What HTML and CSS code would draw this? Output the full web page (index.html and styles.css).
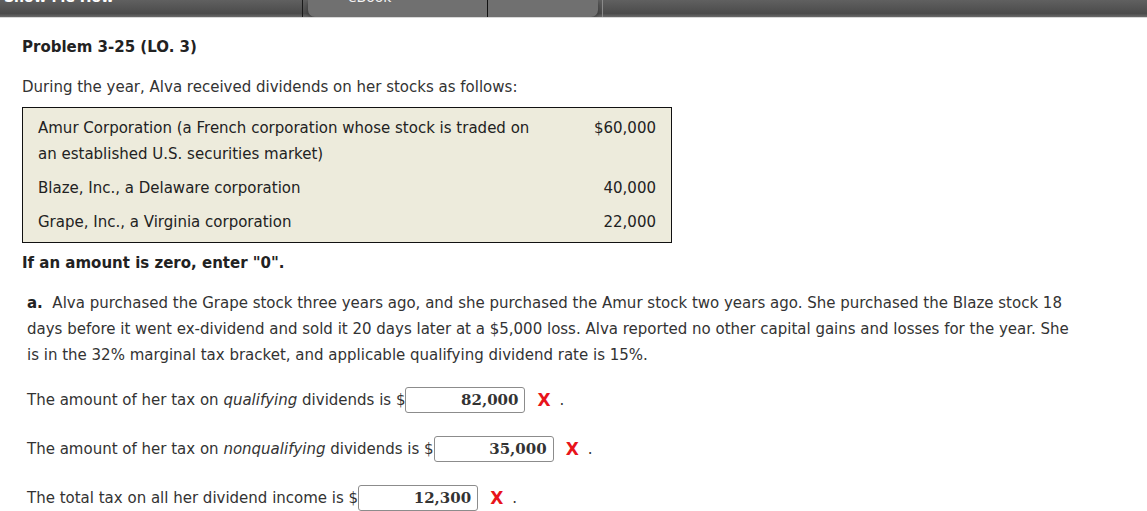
FILE: index.html
```html
<!DOCTYPE html>
<html>
<head>
<meta charset="utf-8">
<link rel="stylesheet" href="styles.css">
</head>
<body>
<div class="topbar">
  <div class="bar-left"><span class="bar-text">Show Me How</span></div>
  <div class="tabs">
    <div class="tab tab-ebook"><span class="bar-text light">eBook</span></div>
    <div class="tab tab-blank"></div>
  </div>
  <div class="bar-right"></div>
</div>
<div class="content">
  <h1 class="title">Problem 3-25 (LO. 3)</h1>
  <p class="intro">During the year, Alva received dividends on her stocks as follows:</p>
  <div class="stocks">
    <div class="row">
      <div class="name">Amur Corporation (a French corporation whose stock is traded on an established U.S. securities market)</div>
      <div class="amt">$60,000</div>
    </div>
    <div class="row">
      <div class="name">Blaze, Inc., a Delaware corporation</div>
      <div class="amt">40,000</div>
    </div>
    <div class="row">
      <div class="name">Grape, Inc., a Virginia corporation</div>
      <div class="amt">22,000</div>
    </div>
  </div>
  <p class="note">If an amount is zero, enter "0".</p>
  <div class="part">
    <p class="question"><b>a.</b>&nbsp; Alva purchased the Grape stock three years ago, and she purchased the Amur stock two years ago. She purchased the Blaze stock 18 days before it went ex-dividend and sold it 20 days later at a $5,000 loss. Alva reported no other capital gains and losses for the year. She is in the 32% marginal tax bracket, and applicable qualifying dividend rate is 15%.</p>
    <div class="answers">
      <div class="answer">
        <span>The amount of her tax on <i>qualifying</i> dividends is $</span><span class="field">82,000</span><span class="wrong">X</span><span class="dot">.</span>
      </div>
      <div class="answer">
        <span>The amount of her tax on <i>nonqualifying</i> dividends is $</span><span class="field">35,000</span><span class="wrong">X</span><span class="dot">.</span>
      </div>
      <div class="answer">
        <span>The total tax on all her dividend income is $</span><span class="field">12,300</span><span class="wrong">X</span><span class="dot">.</span>
      </div>
    </div>
  </div>
</div>
</body>
</html>
```
FILE: styles.css
```css
html, body {
  margin: 0;
  padding: 0;
  background: #fff;
}
body {
  font-family: "DejaVu Sans", Verdana, sans-serif;
  font-size: 15px;
  color: #333;
}
.topbar {
  height: 17px;
  display: flex;
  background: linear-gradient(#606060, #4b4b4b 80%, #6a6a6a);
  overflow: hidden;
  border-bottom: 1px solid #d8d8d8;
}
.bar-left {
  width: 303px;
  border-right: 1px solid #1a1a1a;
  padding-left: 4px;
  box-sizing: border-box;
}
.bar-text {
  display: block;
  font-size: 14px;
  font-weight: bold;
  line-height: 14px;
  margin-top: -10px;
  color: #fff;
}
.bar-text.light {
  font-weight: normal;
  color: #f4f4f4;
}
.tabs {
  display: flex;
  margin-left: 5px;
  width: 290px;
  background: #707070;
  border-radius: 0 0 7px 7px;
  box-shadow: 0 2px 4px rgba(0,0,0,0.35);
}
.tab-ebook {
  width: 180px;
  border-right: 1px solid #111;
  padding-left: 40px;
  box-sizing: border-box;
}
.tab-blank {
  flex: 1;
}
.bar-right {
  flex: 1;
  margin-left: 4px;
  border-left: 1px solid #8a8a8a;
}
.content {
  padding-left: 22px;
}
.title {
  margin: 19px 0 0;
  font-size: 15px;
  line-height: 20px;
  font-weight: bold;
  color: #222;
}
.intro {
  margin: 20px 0 0;
  line-height: 20px;
}
.stocks {
  margin-top: 10px;
  width: 650px;
  box-sizing: border-box;
  background: #edebdc;
  border: 1px solid #111;
  padding: 7px 15px;
  display: flex;
  flex-direction: column;
  gap: 8px;
  color: #222;
}
.row {
  display: flex;
  justify-content: space-between;
  line-height: 26px;
}
.name {
  width: 505px;
}
.amt {
  text-align: right;
}
.note {
  margin: 10px 0 0;
  line-height: 20px;
  font-weight: bold;
  color: #222;
}
.part {
  padding-left: 5px;
}
.question {
  margin: 17px 0 0;
  width: 1050px;
  line-height: 26px;
}
.question b {
  color: #222;
}
.answers {
  margin-top: 19px;
  display: flex;
  flex-direction: column;
  gap: 23px;
}
.answer {
  display: flex;
  align-items: center;
  height: 26px;
}
.field {
  width: 120px;
  height: 26px;
  box-sizing: border-box;
  border: 1px solid #8c8c8c;
  border-radius: 3px;
  background: #fff;
  font-family: "DejaVu Serif", Georgia, serif;
  font-weight: bold;
  font-size: 15px;
  line-height: 24px;
  text-align: right;
  padding-right: 6px;
  color: #333;
}
.wrong {
  margin-left: 12px;
  color: #e8141b;
  font-weight: bold;
  font-size: 17px;
}
.dot {
  margin-left: 9px;
}
```
